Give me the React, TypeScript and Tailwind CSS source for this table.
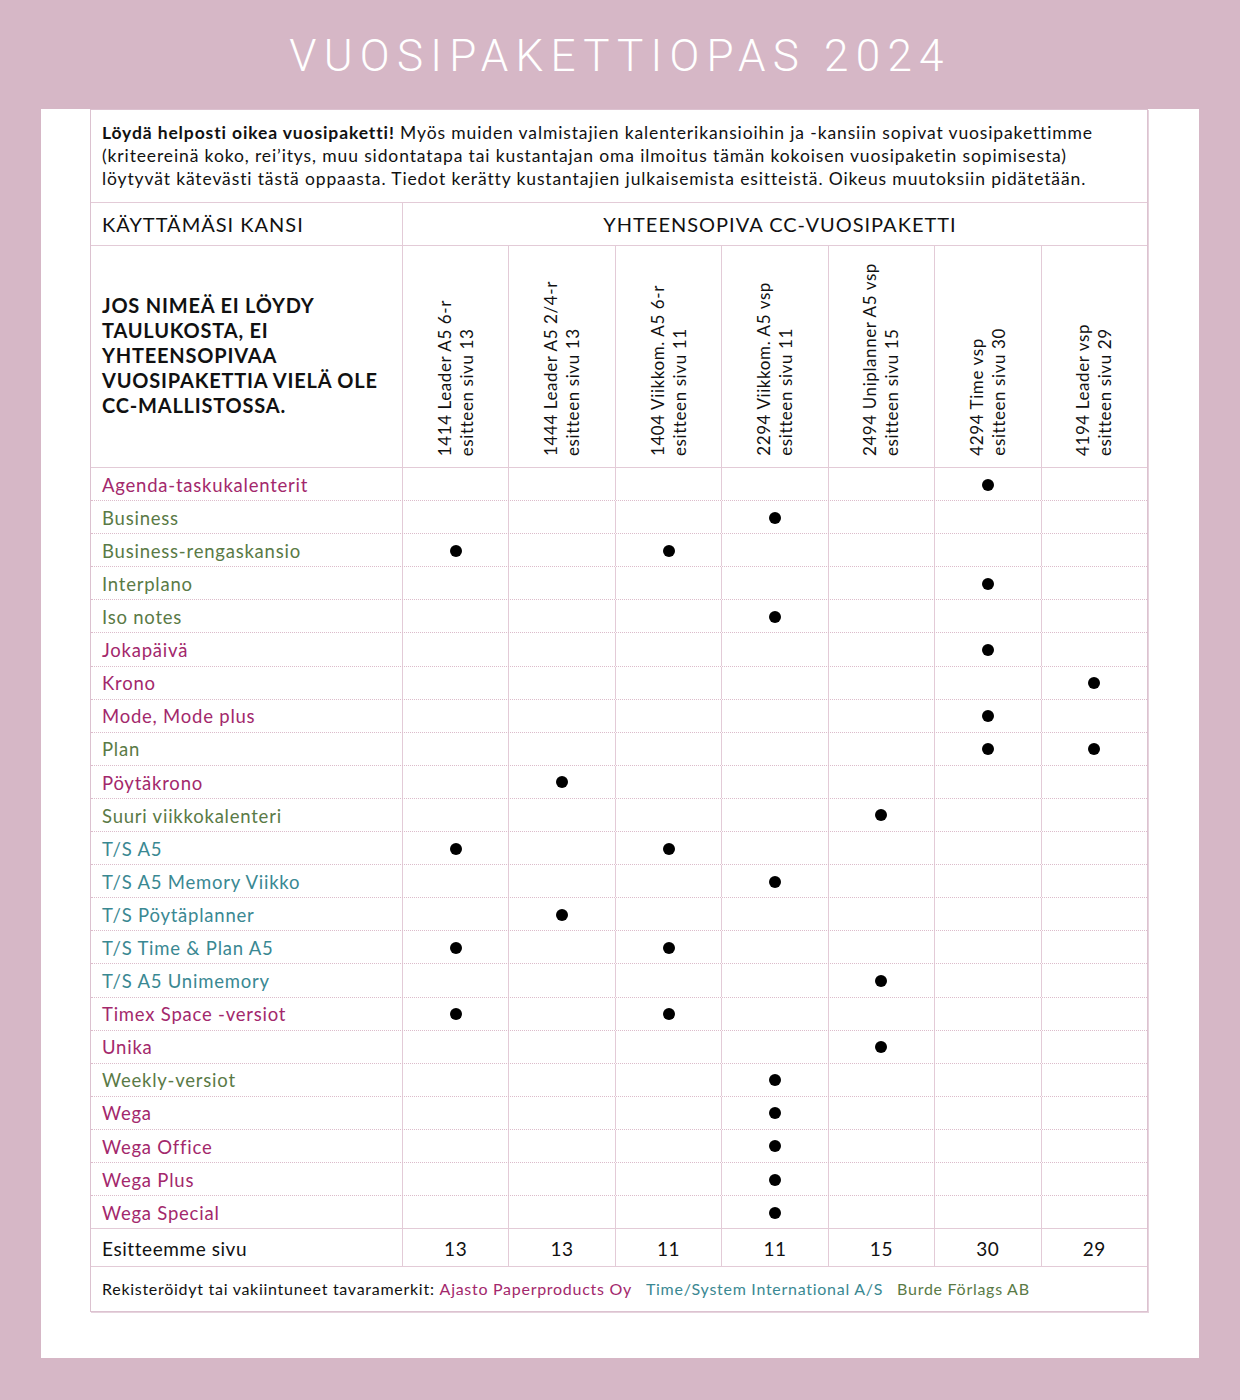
const cols = [
  ["1414 Leader A5 6-r", "esitteen sivu 13"],
  ["1444 Leader A5 2/4-r", "esitteen sivu 13"],
  ["1404 Viikkom. A5 6-r", "esitteen sivu 11"],
  ["2294 Viikkom. A5 vsp", "esitteen sivu 11"],
  ["2494 Uniplanner A5 vsp", "esitteen sivu 15"],
  ["4294 Time vsp", "esitteen sivu 30"],
  ["4194 Leader vsp", "esitteen sivu 29"],
];

const pages = ["13", "13", "11", "11", "15", "30", "29"];

type Brand = "a" | "b" | "t";

const brandColor: Record<Brand, string> = {
  a: "text-[#a3286c]",
  b: "text-[#5a7a46]",
  t: "text-[#3a8892]",
};

const rows: { name: string; brand: Brand; dots: number[] }[] = [
  { name: "Agenda-taskukalenterit", brand: "a", dots: [5] },
  { name: "Business", brand: "b", dots: [3] },
  { name: "Business-rengaskansio", brand: "b", dots: [0, 2] },
  { name: "Interplano", brand: "b", dots: [5] },
  { name: "Iso notes", brand: "b", dots: [3] },
  { name: "Jokapäivä", brand: "a", dots: [5] },
  { name: "Krono", brand: "a", dots: [6] },
  { name: "Mode, Mode plus", brand: "a", dots: [5] },
  { name: "Plan", brand: "b", dots: [5, 6] },
  { name: "Pöytäkrono", brand: "a", dots: [1] },
  { name: "Suuri viikkokalenteri", brand: "b", dots: [4] },
  { name: "T/S A5", brand: "t", dots: [0, 2] },
  { name: "T/S A5 Memory Viikko", brand: "t", dots: [3] },
  { name: "T/S Pöytäplanner", brand: "t", dots: [1] },
  { name: "T/S Time & Plan A5", brand: "t", dots: [0, 2] },
  { name: "T/S A5 Unimemory", brand: "t", dots: [4] },
  { name: "Timex Space -versiot", brand: "a", dots: [0, 2] },
  { name: "Unika", brand: "a", dots: [4] },
  { name: "Weekly-versiot", brand: "b", dots: [3] },
  { name: "Wega", brand: "a", dots: [3] },
  { name: "Wega Office", brand: "a", dots: [3] },
  { name: "Wega Plus", brand: "a", dots: [3] },
  { name: "Wega Special", brand: "a", dots: [3] },
];

export default function App() {
  return (
    <div className="min-h-[1400px] bg-[#d6b7c6] font-['Lato',sans-serif] text-[#111]">
      <h1 className="flex h-[109px] items-center justify-center pt-[3px] font-['Roboto',sans-serif] text-[44px] font-light tracking-[0.165em] text-white">
        VUOSIPAKETTIOPAS 2024
      </h1>

      <div className="mx-[41px] h-[1249px] bg-white pl-[49px] pr-[51px]">
        <div className="border border-[#dcc2d0] shadow-[1px_1px_0_#e6d3dd]">
          {/* intro */}
          <div className="h-[93px] border-b border-[#e3cbd7] px-[11px] pt-[11px] text-[17.5px] leading-[23px] tracking-[0.05em] whitespace-nowrap">
            <b className="font-bold">Löydä helposti oikea vuosipaketti!</b> Myös muiden valmistajien
            kalenterikansioihin ja -kansiin sopivat vuosipakettimme
            <br />
            (kriteereinä koko, rei’itys, muu sidontatapa tai kustantajan oma ilmoitus tämän kokoisen
            vuosipaketin sopimisesta)
            <br />
            löytyvät kätevästi tästä oppaasta. Tiedot kerätty kustantajien julkaisemista esitteistä.
            Oikeus muutoksiin pidätetään.
          </div>

          {/* header */}
          <div className="flex h-[43px] border-b border-[#e3cbd7] text-[20px] tracking-[0.05em]">
            <div className="flex w-[311px] items-center px-[11px]">KÄYTTÄMÄSI KANSI</div>
            <div className="flex flex-1 items-center justify-center border-l border-[#e3cbd7] pl-[10px]">
              YHTEENSOPIVA CC-VUOSIPAKETTI
            </div>
          </div>

          {/* rotated */}
          <div className="flex h-[222px] border-b border-[#e3cbd7]">
            <div className="flex w-[311px] items-center px-[11px] pb-[2px] text-[20px] font-bold leading-[25px] tracking-[0.04em] whitespace-nowrap">
              <div>
                JOS NIMEÄ EI LÖYDY
                <br />
                TAULUKOSTA, EI
                <br />
                YHTEENSOPIVAA
                <br />
                VUOSIPAKETTIA VIELÄ OLE
                <br />
                CC-MALLISTOSSA.
              </div>
            </div>
            {cols.map((c) => (
              <div
                key={c[0]}
                className="flex flex-1 items-end justify-center border-l border-[#e3cbd7] pb-[11px]"
              >
                <div className="rotate-180 text-[17px] leading-[22px] tracking-[0.035em] whitespace-nowrap [writing-mode:vertical-rl]">
                  <div>{c[0]}</div>
                  <div>{c[1]}</div>
                </div>
              </div>
            ))}
          </div>

          {/* data */}
          {rows.map((r, i) => (
            <div
              key={r.name}
              className={
                "flex h-[33.1px] " +
                (i < rows.length - 1
                  ? "border-b border-dotted border-[#dcbccb]"
                  : "border-b border-solid border-[#e3cbd7]")
              }
            >
              <div
                className={
                  "flex w-[311px] items-center px-[11px] pt-[3px] text-[18.5px] tracking-[0.042em] " +
                  brandColor[r.brand]
                }
              >
                {r.name}
              </div>
              {cols.map((c, ci) => (
                <div
                  key={c[0]}
                  className="flex flex-1 items-center justify-center border-l border-solid border-[#e3cbd7] pt-[1px]"
                >
                  {r.dots.includes(ci) && (
                    <span className="h-[12px] w-[12px] rounded-full bg-black" />
                  )}
                </div>
              ))}
            </div>
          ))}

          {/* page row */}
          <div className="flex h-[38px] border-b border-[#e3cbd7] pt-[3px] text-[19px] tracking-[0.03em]">
            <div className="flex w-[311px] items-center px-[11px]">Esitteemme sivu</div>
            {pages.map((p, i) => (
              <div
                key={i}
                className="-mt-[3px] flex flex-1 items-center justify-center border-l border-[#e3cbd7] pt-[3px]"
              >
                {p}
              </div>
            ))}
          </div>

          {/* trademarks */}
          <div className="flex h-[44px] items-center px-[11px] text-[16px] tracking-[0.045em] whitespace-nowrap">
            <span>Rekisteröidyt tai vakiintuneet tavaramerkit:</span>
            <span className="ml-[5px] text-[#a3286c]">Ajasto Paperproducts Oy</span>
            <span className="ml-[14px] text-[#3a8892]">Time/System International A/S</span>
            <span className="ml-[14px] text-[#5a7a46]">Burde Förlags AB</span>
          </div>
        </div>
      </div>
    </div>
  );
}
